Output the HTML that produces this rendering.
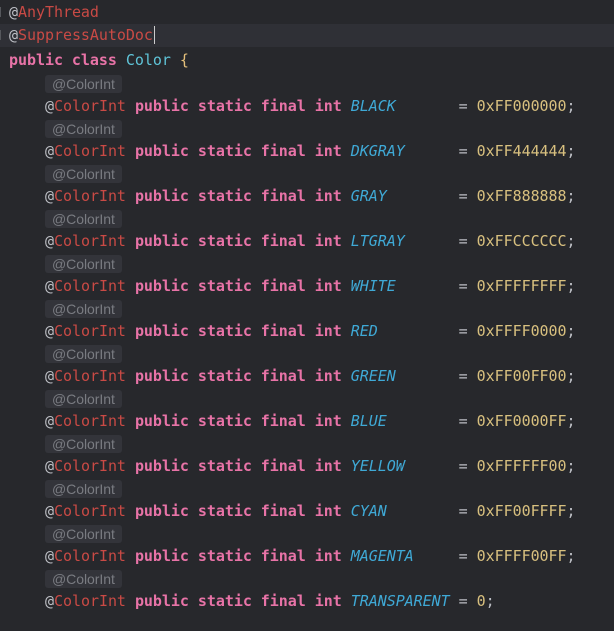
<!DOCTYPE html>
<html><head><style>
body{margin:0;width:614px;height:631px;background:#27282c;overflow:hidden;font-family:"DejaVu Sans Mono","Liberation Mono",monospace;font-size:15px;color:#bcbec4}
.l{position:absolute;left:0;width:614px;height:22.5px;line-height:22.5px;white-space:pre;letter-spacing:-0.04px}
.t{position:absolute;left:9px;top:0px}
.hl{background:#2f3036}
.a{color:#bcbec4}.an{color:#c94a45}
.k{color:#e873a7;font-weight:bold}
.c{color:#5fc4d8}.br{color:#e5c07b}
.n{color:#3fa9d6;font-style:italic}
.v{color:#d8c07f}
.hint{position:absolute;left:45px;top:3px;height:18px;line-height:18px;padding:0 7px 0 7px;background:#33343a;border-radius:3px;color:#7a7c82;font-family:"Liberation Sans","DejaVu Sans",sans-serif;font-size:14px}
.f{position:absolute;left:0;width:4px;height:10px;border-left:1px solid #55575c;top:6px}
</style></head><body>
<div class="l" style="top:1px"><span class="f"></span><span class="t"><span class="a">@</span><span class="an">AnyThread</span></span></div>
<div class="l hl" style="top:24px"><span class="f"></span><span class="t"><span class="a">@</span><span class="an">SuppressAutoDoc</span><span style="border-left:1px solid #ccc;margin-left:1px"></span></span></div>
<div class="l" style="top:49px"><span class="t"><span class="k">public class </span><span class="c">Color</span> <span class="br">{</span></span></div>
<div id="rows"></div>
<script>
var d=[["BLACK      ","0xFF000000;"],["DKGRAY     ","0xFF444444;"],["GRAY       ","0xFF888888;"],["LTGRAY     ","0xFFCCCCCC;"],["WHITE      ","0xFFFFFFFF;"],["RED        ","0xFFFF0000;"],["GREEN      ","0xFF00FF00;"],["BLUE       ","0xFF0000FF;"],["YELLOW     ","0xFFFFFF00;"],["CYAN       ","0xFF00FFFF;"],["MAGENTA    ","0xFFFF00FF;"],["TRANSPARENT","0;"]];
var h="";
d.forEach(function(r,i){var y=72+45*i;
h+='<div class="l" style="top:'+y+'px"><span class="hint">@ColorInt</span></div>';
h+='<div class="l" style="top:'+(y+22.5)+'px"><span class="t" style="left:45px"><span class="a">@</span><span class="an">ColorInt</span> <span class="k">public static final int</span> <span class="n">'+r[0]+'</span> = <span class="v">'+r[1].replace(";","")+'</span>;</span></div>';});
document.getElementById("rows").outerHTML=h;
</script>
</body></html>
